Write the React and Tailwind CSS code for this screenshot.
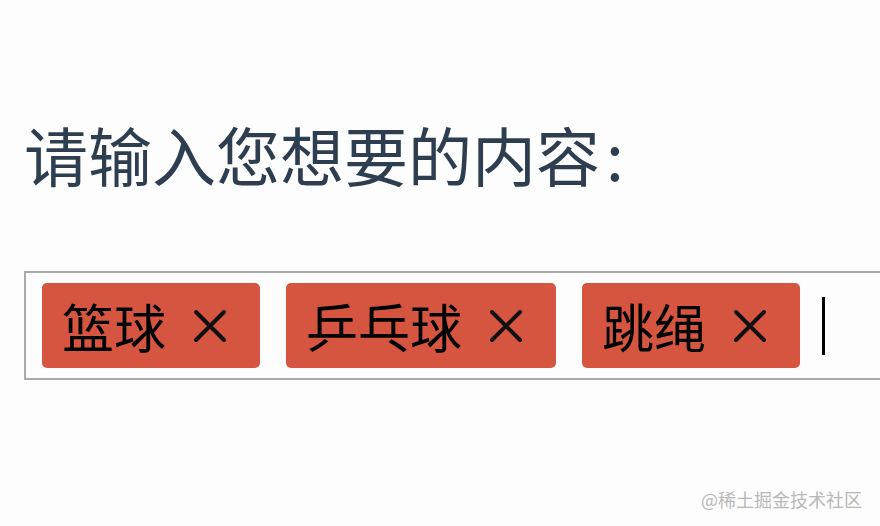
import React from 'react';

const tags = ['篮球', '乒乓球', '跳绳'];

const Cross = () => (
  <svg width="34" height="34" viewBox="0 0 34 34" className="shrink-0">
    <path d="M3 3L31 31M31 3L3 31" stroke="#111" strokeWidth="4" strokeLinecap="round" />
  </svg>
);

const App = () => {
  return (
    <div
      className="relative w-[880px] h-[526px] overflow-hidden bg-[#fdfdfd] pl-[24px]"
      style={{ fontFamily: '"Noto Sans CJK SC", "Noto Sans", sans-serif' }}
    >
      <h1 className="pt-[108px] text-[64px] leading-[90px] font-normal text-[#2c3e50]">
        请输入您想要的内容<span className="ml-[6px]">:</span>
      </h1>

      <div className="mt-[73px] w-[900px] h-[109px] border-2 border-[#ababab] flex items-center pl-[16px] gap-[26px]">
        {tags.map(t => (
          <div
            key={t}
            className="h-[85px] bg-[#d55541] rounded-[5px] flex items-center pl-[20px] pr-[33px] text-[52px] text-black"
          >
            <span className="leading-none">{t}</span>
            <span className="ml-[27px] flex items-center"><Cross /></span>
          </div>
        ))}
        <div className="w-[3px] h-[58px] bg-black -ml-[4px]" />
      </div>

      <div className="absolute right-[18px] bottom-[18px] text-[18px] text-[#b8b8b8] leading-none">
        @稀土掘金技术社区
      </div>
    </div>
  );
};

export default App;
